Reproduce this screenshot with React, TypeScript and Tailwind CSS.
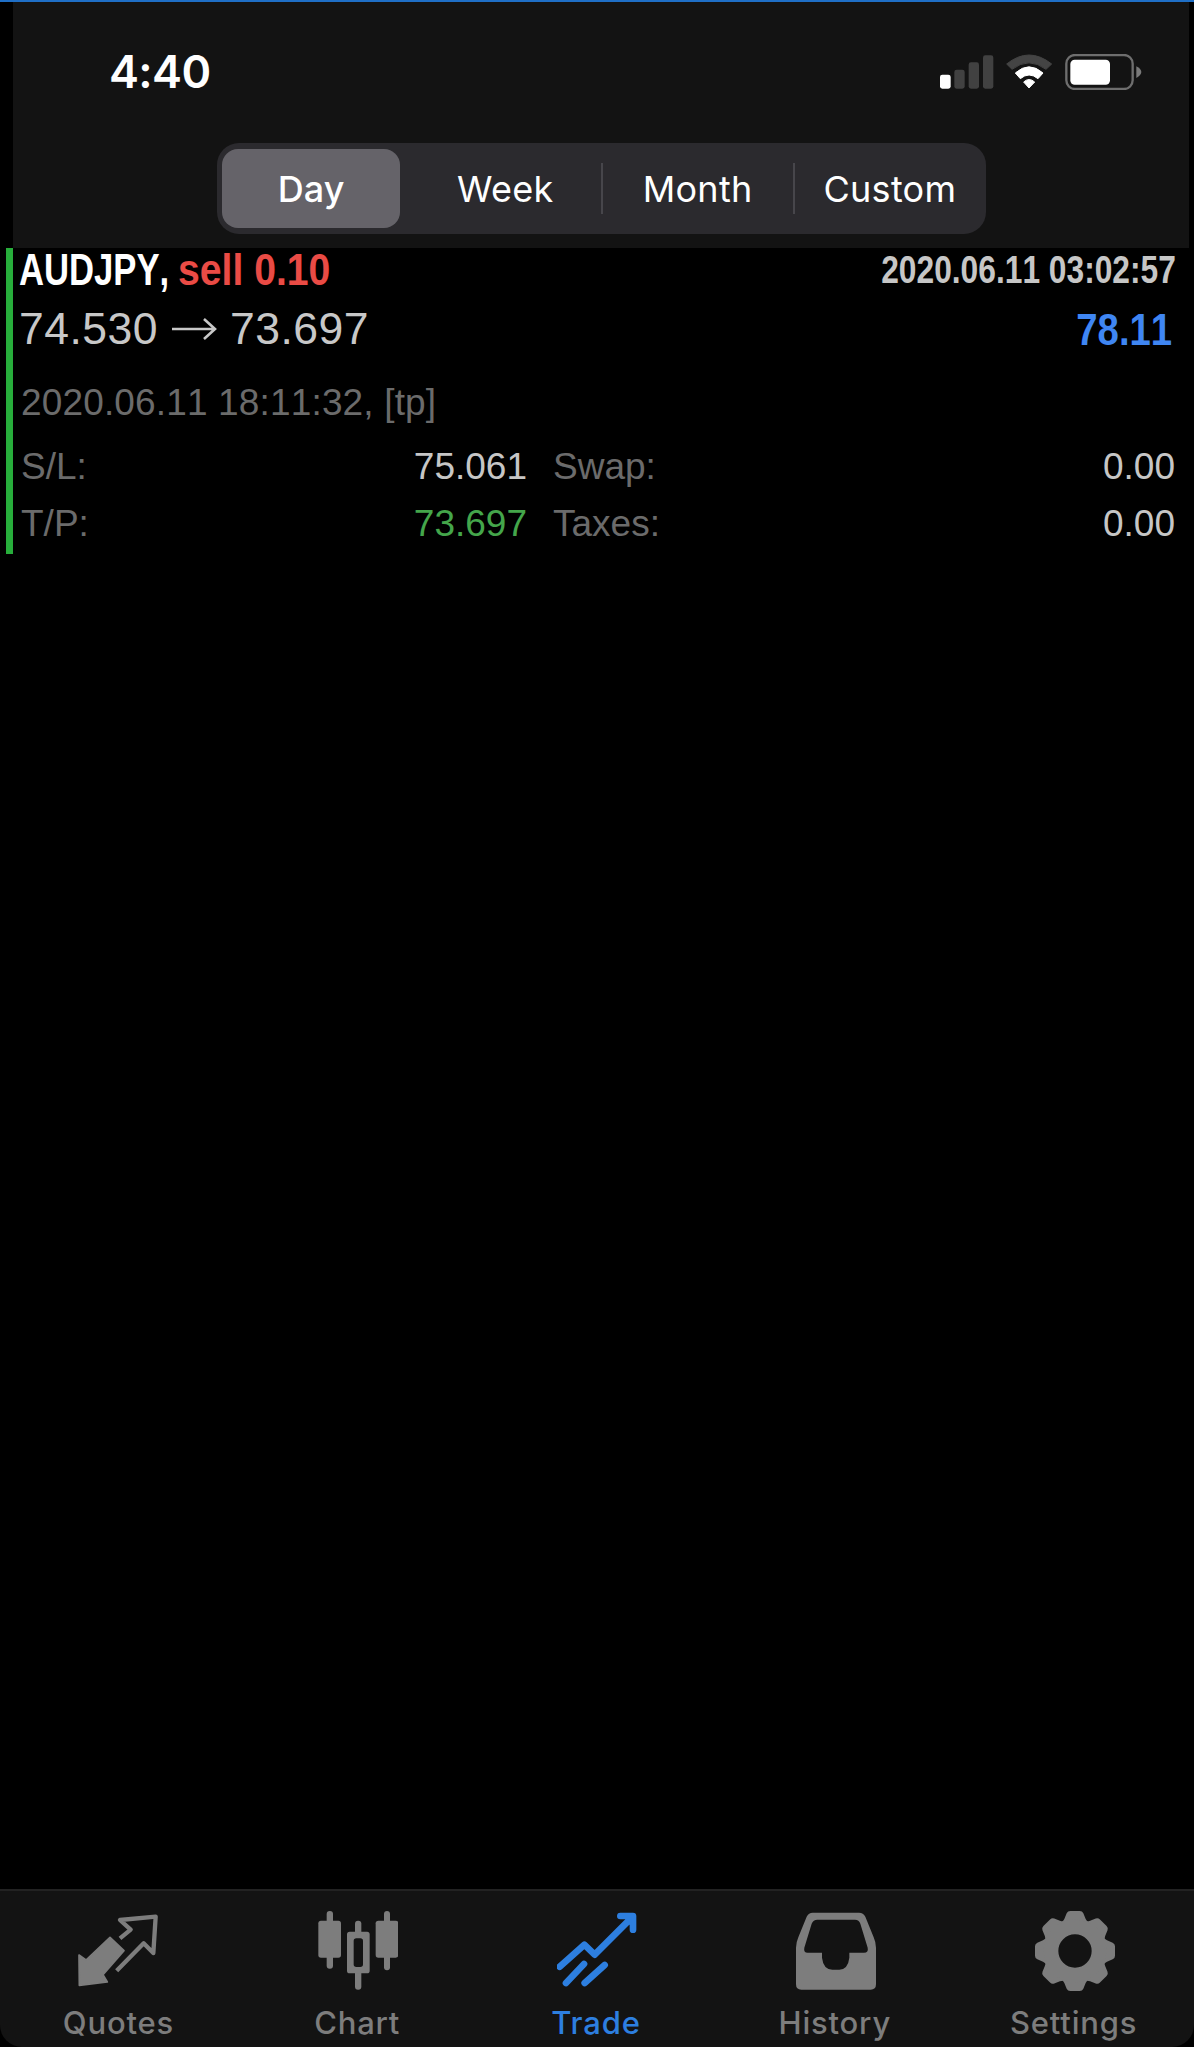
import type { ReactNode } from "react";

const periods = ["Day", "Week", "Month", "Custom"];

function SignalIcon() {
  return (
    <svg className="h-9 w-[54px]" viewBox="120 160 162 108">
      <rect x="120" y="222" width="32" height="42" rx="7" fill="#fff" />
      <rect x="163" y="207" width="31" height="57" rx="7" fill="#414141" />
      <rect x="206" y="185" width="31" height="79" rx="7" fill="#414141" />
      <rect x="249" y="164" width="31" height="100" rx="7" fill="#414141" />
    </svg>
  );
}

function WifiIcon() {
  return (
    <svg className="h-9 w-[47px]" viewBox="318 160 141 108" strokeLinejoin="round" strokeWidth="3">
      <path d="M320 190Q387 136 455 190L438 206Q387 167 336 206Z" fill="#444" stroke="#444" />
      <path d="M346 217Q387 180 429 217L414 234Q387 212 361 234Z" fill="#fff" stroke="#fff" />
      <path d="M371 244Q387 229 404 244L387 262Z" fill="#fff" stroke="#fff" />
    </svg>
  );
}

function BatteryIcon() {
  return (
    <svg className="h-9 w-[77px]" viewBox="495 160 231 108">
      <rect x="499" y="163" width="199" height="102" rx="26" fill="none" stroke="#6e6e6e" strokeWidth="7" />
      <rect x="511" y="177" width="119" height="75" rx="13" fill="#fff" />
      <path d="M709 197Q724 205 724 214T709 232Z" fill="#7a7a7a" />
    </svg>
  );
}

function QuotesIcon() {
  return (
    <svg className="mr-[3px] size-20" viewBox="234 124 240 240" fill="currentColor" stroke="currentColor" strokeLinejoin="round">
      <path d="M330 203L372 243L309 315L322 337L238 347L237 256L258 271Z" strokeWidth="5" />
      <path d="M360 206L392 180L360 151L467 141L460 250L431 221L350 303" fill="none" strokeWidth="13" />
    </svg>
  );
}

function ChartIcon() {
  return (
    <svg className="size-20" viewBox="144 124 240 240" fill="currentColor">
      <rect x="170" y="124" width="19" height="173" rx="9" />
      <rect x="145" y="153" width="68" height="111" rx="8" />
      <rect x="342" y="124" width="18" height="178" rx="9" />
      <rect x="317" y="153" width="68" height="111" rx="8" />
      <rect x="255" y="153" width="19" height="50" rx="9" />
      <rect x="255" y="300" width="19" height="60" rx="9" />
      <path
        fillRule="evenodd"
        d="M239 186H291Q299 186 299 194V303Q299 311 291 311H239Q231 311 231 303V194Q231 186 239 186ZM259 206Q251 206 251 214V284Q251 292 259 292H271Q279 292 279 284V214Q279 206 271 206Z"
      />
    </svg>
  );
}

function TradeIcon() {
  return (
    <svg
      className="size-20"
      viewBox="167 124 240 240"
      fill="none"
      stroke="currentColor"
      strokeWidth="20"
      strokeLinecap="round"
      strokeLinejoin="round"
    >
      <path d="M175 291L249 225L280 255L385 150" />
      <path d="M357 139H395V180" />
      <path d="M248 283L194 340M310 286L250 340" />
      <path d="M372 146H388V166Z" fill="currentColor" strokeWidth="4" />
    </svg>
  );
}

function HistoryIcon() {
  return (
    <svg className="size-20" viewBox="167 124 240 240" fill="currentColor">
      <path
        fillRule="evenodd"
        d="M217 129H356Q369 129 375 141L400 203Q407 219 407 234V344Q407 360 391 360H183Q167 360 167 344V234Q167 219 174 203L199 141Q205 129 217 129ZM231 150Q219 150 214 162L192 234Q189 249 202 249H245V264Q249 299 276 300H297Q323 299 327 264V249H371Q385 249 382 234L360 162Q356 150 344 150Z"
      />
    </svg>
  );
}

function SettingsIcon() {
  return (
    <svg className="size-20" viewBox="-120 -120 240 240" fill="currentColor">
      {[0, 45, 90, 135, 180, 225, 270, 315].map((angle) => (
        <path
          key={angle}
          transform={`rotate(${angle})`}
          d="M-42 -85Q-36 -88 -32 -96L-25 -113Q-22 -120 -14 -120H14Q22 -120 25 -113L32 -96Q36 -88 42 -85L30 -70H-30Z"
        />
      ))}
      <circle r="72" fill="none" stroke="currentColor" strokeWidth="44" />
    </svg>
  );
}

const tabs: { label: string; icon: ReactNode; active?: boolean }[] = [
  { label: "Quotes", icon: <QuotesIcon /> },
  { label: "Chart", icon: <ChartIcon /> },
  { label: "Trade", icon: <TradeIcon />, active: true },
  { label: "History", icon: <HistoryIcon /> },
  { label: "Settings", icon: <SettingsIcon /> },
];

function Header() {
  return (
    <header className="mr-[5px] ml-[13px] h-[246px] shrink-0 bg-[#131313] pt-[38px]">
      <div className="flex h-16 justify-between pr-[47px] pl-[96px]">
        <span className="text-[45px] leading-[64px] font-semibold tracking-[-0.6px] text-white">4:40</span>
        <div className="mt-[14px] flex h-9 gap-3">
          <SignalIcon />
          <WifiIcon />
          <BatteryIcon />
        </div>
      </div>

      <div className="mt-[39px] ml-[204px] flex h-[91px] w-[769px] items-center rounded-[22px] bg-[#2b2a2e]">
        {periods.map((period, index) => (
          <div key={period} className="relative flex h-full flex-1 items-center justify-center">
            {index === 0 && (
              <div className="absolute inset-y-[6px] right-[9px] left-[5px] rounded-[16px] bg-[#656369]" />
            )}
            {index > 1 && <div className="absolute -left-px h-[51px] w-[2px] bg-[#47464b]" />}
            <span
              className={
                index === 0
                  ? "relative -left-[2px] text-[36px] font-medium text-white"
                  : "text-[36px] tracking-[0.3px] text-white"
              }
            >
              {period}
            </span>
          </div>
        ))}
      </div>
    </header>
  );
}

function DetailRow({ label, value, green, side, className }: {
  label: string;
  value: string;
  green?: boolean;
  side: string;
  className: string;
}) {
  return (
    <div className={`flex text-[37px] ${className}`}>
      <div className="ml-[8px] flex w-[506px] justify-between">
        <span className="text-[#6b6b6b]">{label}</span>
        <span className={green ? "text-[#44a64b]" : "text-[#c6c6c6]"}>{value}</span>
      </div>
      <div className="ml-[26px] flex w-[622px] justify-between">
        <span className="text-[#6b6b6b] [font-kerning:normal]">{side}</span>
        <span className="text-[#c6c6c6]">0.00</span>
      </div>
    </div>
  );
}

function Deal() {
  return (
    <article className="ml-[6px] h-[306px] shrink-0 border-l-[7px] border-[#27ae3b] font-['Liberation_Sans',Arial,sans-serif] whitespace-nowrap [font-kerning:none]">
      <div className="flex h-[43px] justify-between pr-[18px] pl-[6px] leading-[43px] font-bold">
        <div className="flex text-[45px]">
          <span className="w-[159px] origin-left scale-x-[0.77] text-white">AUDJPY,</span>
          <span className="origin-left scale-x-[0.87] text-[#ea4b45]">sell 0.10</span>
        </div>
        <span className="mt-px origin-right scale-x-[0.835] text-[38px] text-[#c6c6c6]">2020.06.11 03:02:57</span>
      </div>

      <div className="flex h-[75px] items-center pl-[6px] text-[44.5px] leading-[75px] text-[#c8c8c8]">
        <span className="w-[136px] tracking-[0.5px]">74.530</span>
        <svg className="ml-[17px] h-6 w-[46px]" viewBox="0 0 46 24" fill="none" stroke="currentColor" strokeWidth="2.6">
          <path d="M0 12H43M32 2L43 12L32 22" />
        </svg>
        <span className="ml-[12px] tracking-[0.5px]">73.697</span>
        <span className="mt-[2px] mr-[22px] ml-auto origin-right scale-x-[0.87] text-[44px] font-bold text-[#3f86f3]">
          78.11
        </span>
      </div>

      <p className="h-[73px] pl-[8px] text-[37px] leading-[74px] tracking-[0.15px] text-[#6b6b6b]">2020.06.11 18:11:32, [tp]</p>
      <DetailRow className="h-[54px] leading-[55px]" label="S/L:" value="75.061" side="Swap:" />
      <DetailRow className="h-[61px] leading-[61px]" label="T/P:" value="73.697" green side="Taxes:" />
    </article>
  );
}

function TabBar() {
  return (
    <nav className="mt-auto flex h-[158px] shrink-0 rounded-b-[22px] border-t-2 border-[#222] bg-[#131313] pt-[20px]">
      {tabs.map((tab) => (
        <div
          key={tab.label}
          className={`flex flex-1 flex-col items-center ${tab.active ? "text-[#2d7fe0]" : "text-[#7d7d7d]"}`}
        >
          {tab.icon}
          <span className="mt-[12px] mr-[2px] text-[31px] leading-[40px] font-medium tracking-[0.8px]">{tab.label}</span>
        </div>
      ))}
    </nav>
  );
}

export default function App() {
  return (
    <main className="flex h-[2047px] w-[1194px] flex-col overflow-hidden border-t-2 border-[#1f6fc6] bg-black font-[Inter,sans-serif]">
      <Header />
      <Deal />
      <TabBar />
    </main>
  );
}
